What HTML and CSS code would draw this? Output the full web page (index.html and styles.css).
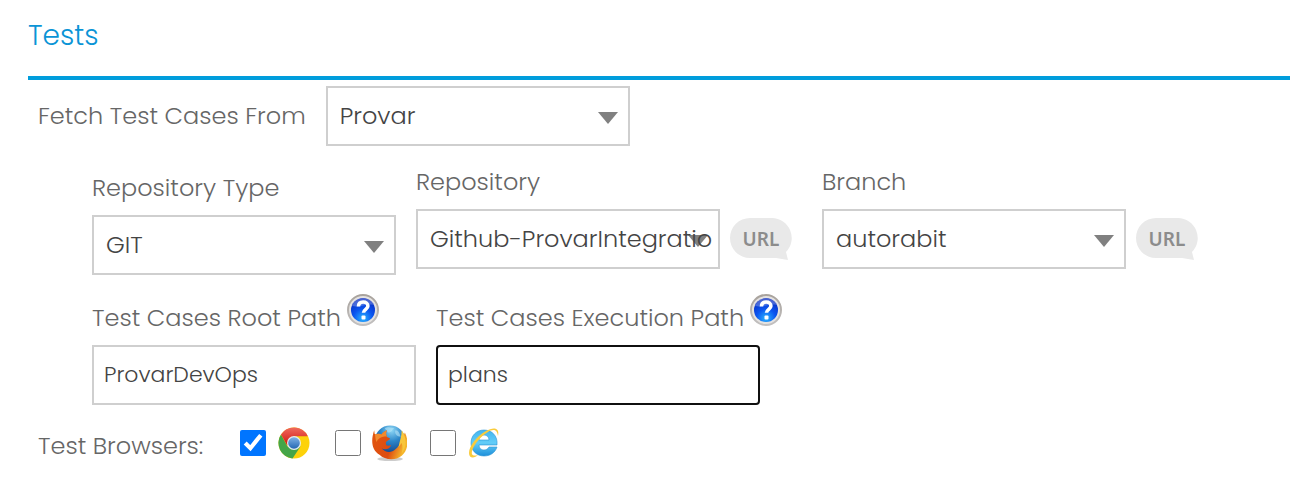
FILE: index.html
```html
<!DOCTYPE html>
<html lang="en">
<head>
    <meta charset="UTF-8">
    <meta name="viewport" content="width=device-width, initial-scale=1.0">
    <title>Tests</title>
    <link rel="stylesheet" href="styles.css">
</head>
<body>
    <!-- shared gradients and the help icon -->
    <svg class="defs" width="0" height="0" aria-hidden="true">
        <defs>
            <radialGradient id="help-blue" cx="50%" cy="85%" r="80%">
                <stop offset="0" stop-color="#2ab4ff"/>
                <stop offset="0.5" stop-color="#0a55f0"/>
                <stop offset="1" stop-color="#0a2cc0"/>
            </radialGradient>
            <linearGradient id="help-ring" x1="0" y1="0" x2="0" y2="1">
                <stop offset="0" stop-color="#a8a29c"/>
                <stop offset="1" stop-color="#c2c0c0"/>
            </linearGradient>
        </defs>
        <symbol id="help" viewBox="0 0 32 32">
            <circle cx="16" cy="16" r="15" fill="#e4e2e0" stroke="url(#help-ring)" stroke-width="2"/>
            <circle cx="16" cy="16" r="12" fill="url(#help-blue)"/>
            <path d="M5 12a12 12 0 0 1 11-8c5 0 9 3 11 7-7-2-14 3-22 1z" fill="#fff" opacity="0.25"/>
            <path d="M11.500 12.500c0-3 2-4.500 4.700-4.500s4.700 1.500 4.700 4c0 3.300-4.400 3.400-4.400 6.800" fill="none" stroke="#fff" stroke-width="3.600"/>
            <rect x="14.500" y="21.500" width="4" height="4" rx="1" fill="#fff"/>
        </symbol>
    </svg>

    <div class="panel">
        <h2 class="panel-title">Tests</h2>

        <div class="row source">
            <label for="source">Fetch Test Cases From</label>
            <select id="source"><option>Provar</option></select>
        </div>

        <div class="row repo">
            <div class="field">
                <label for="repo-type">Repository Type</label>
                <select id="repo-type"><option>GIT</option></select>
            </div>
            <div class="field with-url">
                <label for="repository">Repository</label>
                <div class="control">
                    <select id="repository"><option>Github-ProvarIntegratio</option></select>
                    <button type="button" class="url">URL</button>
                </div>
            </div>
            <div class="field with-url">
                <label for="branch">Branch</label>
                <div class="control">
                    <select id="branch"><option>autorabit</option></select>
                    <button type="button" class="url">URL</button>
                </div>
            </div>
        </div>

        <div class="row paths">
            <div class="field">
                <div class="label-help">
                    <label for="root-path">Test Cases Root Path</label>
                    <svg class="icon"><use href="#help"/></svg>
                </div>
                <input type="text" id="root-path" value="ProvarDevOps">
            </div>
            <div class="field">
                <div class="label-help">
                    <label for="exec-path">Test Cases Execution Path</label>
                    <svg class="icon"><use href="#help"/></svg>
                </div>
                <input type="text" id="exec-path" class="active" value="plans">
            </div>
        </div>

        <div class="row browsers">
            <span class="browsers-label">Test Browsers:</span>
            <label class="browser">
                <input type="checkbox" name="browser" value="chrome" aria-label="Chrome" checked>
                <svg class="icon" viewBox="0 0 32 32">
                    <defs>
                        <linearGradient id="c-red" x1="0" y1="0" x2="0" y2="1"><stop offset="0" stop-color="#ef6a5c"/><stop offset="1" stop-color="#d0150f"/></linearGradient>
                        <linearGradient id="c-blue" x1="0" y1="0" x2="0" y2="1"><stop offset="0" stop-color="#7fb2e5"/><stop offset="1" stop-color="#2467b3"/></linearGradient>
                    </defs>
                    <circle cx="16" cy="16" r="15.500" fill="#fdd20a"/>
                    <path d="M3 7.500A15.500 15.500 0 0 0 14.500 31.500L22.500 19.500 9.500 19.500z" fill="#45a548"/>
                    <path d="M3 7.500A15.500 15.500 0 0 1 29.800 9.200H16L9.300 18.500z" fill="url(#c-red)"/>
                    <circle cx="16" cy="16" r="7" fill="#e6ebee"/>
                    <circle cx="16" cy="16" r="5.800" fill="url(#c-blue)"/>
                </svg>
            </label>
            <label class="browser firefox">
                <input type="checkbox" name="browser" value="firefox" aria-label="Firefox">
                <svg class="icon" viewBox="0 0 34 34">
                    <defs>
                        <radialGradient id="f-globe" cx="55%" cy="15%" r="80%"><stop offset="0" stop-color="#8fd8f6"/><stop offset="0.45" stop-color="#2d87c9"/><stop offset="1" stop-color="#123f87"/></radialGradient>
                        <linearGradient id="f-fox" x1="0" y1="0" x2="1" y2="0.300"><stop offset="0" stop-color="#e2560f"/><stop offset="0.650" stop-color="#dd4c12"/><stop offset="1" stop-color="#f5b52b"/></linearGradient>
                    </defs>
                    <ellipse cx="18" cy="32" rx="12" ry="2" fill="#999" opacity="0.5"/>
                    <circle cx="18" cy="15" r="14.500" fill="url(#f-globe)"/>
                    <path d="M13 3c4-2 6 0 9 0-3 2-2 4-6 4zM23 5c3 0 4 3 5 6-3 0-6-2-5-6z" fill="#b6e4f7" opacity="0.6"/>
                    <path d="M3 5c0 2 0 3 1 4 2-1 4-1 6 0 1-2 3-3 5-4-1 2-1 4 0 6 1 1 3 1 3 2s-4 2-4 4c0 3 2 3 5 2-1 4-6 5-9 3 3 4 9 5 13 1 5-4 6-9 9-16 4 8 3 17-3 22-6 5-16 4-21-1C0 23 0 14 3 5z" fill="url(#f-fox)"/>
                    <path d="M29 5c5 7 5 16 0 22 1-4 1-7 0-10l-3 4c1-6 3-10 3-16z" fill="#f8c63b"/>
                    <path d="M3 5c0 2 0 3 1 4 2-1 4-1 6 0 1-2 3-3 5-4-1 2-1 4 0 6-4-1-8 1-10 5-1-3-1-7-2-11z" fill="#f28a2c"/>
                </svg>
            </label>
            <label class="browser">
                <input type="checkbox" name="browser" value="ie" aria-label="Internet Explorer">
                <svg class="icon" viewBox="0 0 32 32">
                    <defs>
                        <linearGradient id="ie-blue" x1="0" y1="0" x2="0" y2="1"><stop offset="0" stop-color="#43b5ee"/><stop offset="0.5" stop-color="#63cdf8"/><stop offset="1" stop-color="#1d8fda"/></linearGradient>
                    </defs>
                    <path fill-rule="evenodd" d="M16 3C8 3 3 9 3 16s5 13 13 13c6 0 11-3 13-9h-8c-1 2-3 3-5 3-3 0-5-2-5-5h18c1-9-5-15-13-15zM11 13c0-3 2-5 5-5s5 2 5 5z" fill="url(#ie-blue)" stroke="#2b93d4" stroke-width="0.600"/>
                    <path d="M30 9c2-9-5-9-12-5C9 9 1 19 1 26c0 6 6 5 9 2-4 1-7 1-6-4C6 17 13 9 20 5c5-3 9-3 10 4z" fill="#f9cb3c"/>
                </svg>
            </label>
        </div>
    </div>
</body>
</html>
```
FILE: styles.css
```css
* {
    box-sizing: border-box;
}
body {
    margin: 0;
    background-color: #fff;
    color: #666;
    font-family: Poppins, Inter, sans-serif;
    font-size: 24px;
    font-weight: 300;
    line-height: 36px;
}
.defs {
    position: absolute;
}
.panel {
    padding: 18px 0 0 28px;
}
.panel-title {
    margin: 0 0 6px;
    padding: 0 0 22px;
    border-bottom: 4px solid #009ddc;
    color: #0a94d6;
    font-size: 28px;
    font-weight: 300;
}
.row {
    display: flex;
}
.source {
    align-items: center;
    gap: 20px;
    padding-left: 10px;
}
.repo {
    align-items: flex-end;
    gap: 20px;
    padding: 18px 0 0 64px;
}
.paths {
    gap: 20px;
    padding: 19px 0 0 64px;
}
.browsers {
    align-items: center;
    padding: 17px 0 0 10px;
}
.field {
    display: flex;
    flex-direction: column;
    gap: 9px;
}
.with-url {
    padding: 0 10px 6px 0;
}
.control {
    display: flex;
    align-items: center;
    gap: 10px;
}
.label-help {
    display: flex;
    align-items: flex-start;
    gap: 6px;
}
.label-help label {
    padding-top: 6px;
}
.icon {
    width: 32px;
    height: 32px;
}
select,
input[type="text"] {
    height: 60px;
    border: 2px solid #cfcfcf;
    border-radius: 0;
    color: #444;
    font-family: inherit;
    font-weight: 300;
}
select {
    appearance: none;
    width: 304px;
    padding: 0 0 2px 12px;
    background: #fff url("data:image/svg+xml,%3Csvg xmlns='http://www.w3.org/2000/svg' width='20' height='12'%3E%3Cpath d='M0 0h20L10 12z' fill='%23808080'/%3E%3C/svg%3E") no-repeat right 10px top 24px;
    font-size: 24px;
}
input[type="text"] {
    width: 324px;
    padding: 0 10px 2px;
    font-size: 22px;
}
input[type="text"].active {
    border-color: #101010;
    border-radius: 4px;
}
.url {
    width: 62px;
    height: 42px;
    padding: 0;
    border: none;
    background: url("data:image/svg+xml,%3Csvg xmlns='http://www.w3.org/2000/svg' width='62' height='42'%3E%3Cpath d='M20 0h22a20 20 0 0 1 14 34l2 8-12-2H20a20 20 0 0 1 0-40z' fill='%23e9e9e9'/%3E%3C/svg%3E") no-repeat;
    color: #8c8c8c;
    font-family: "Noto Sans", sans-serif;
    font-size: 19px;
    font-weight: 600;
}
.browsers-label {
    width: 202px;
    padding-top: 6px;
}
.browser {
    display: flex;
    align-items: center;
    gap: 12px;
    width: 95px;
}
.browser input {
    width: 26px;
    height: 26px;
    margin: 0;
}
.firefox {
    gap: 10px;
}
.firefox .icon {
    width: 36px;
    height: 36px;
}
```
